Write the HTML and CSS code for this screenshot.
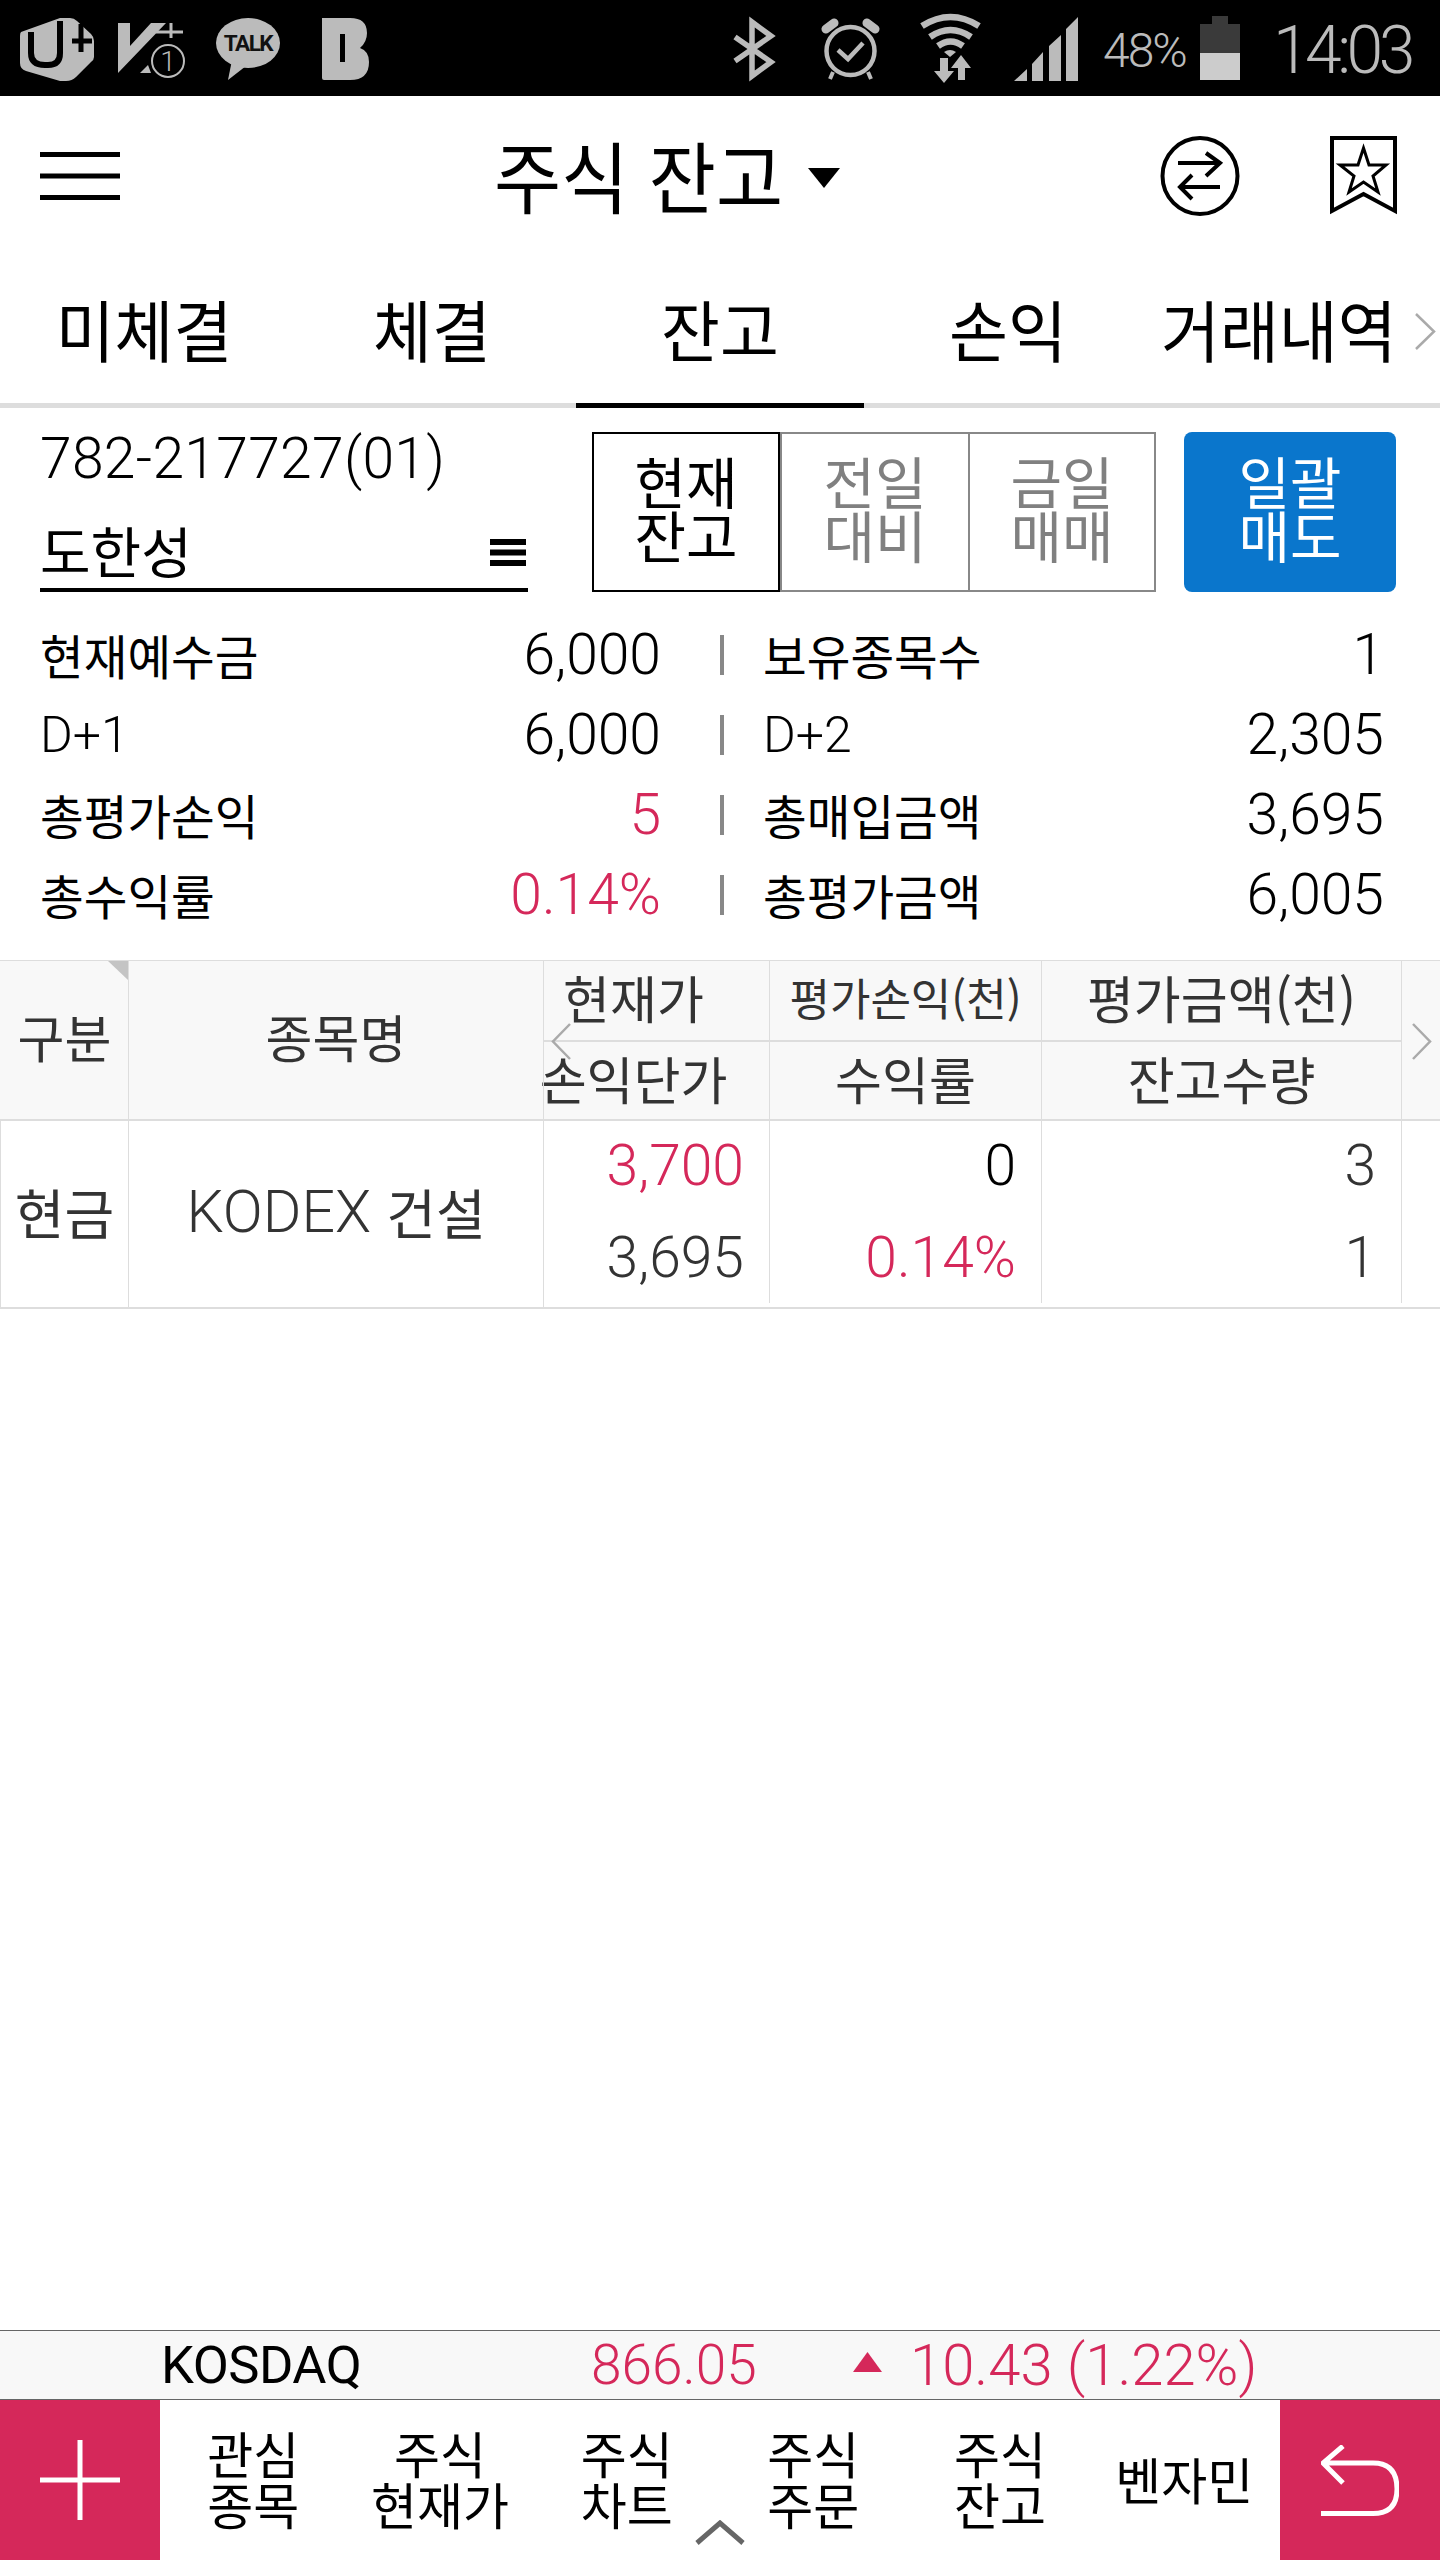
FILE: index.html
```html
<!DOCTYPE html>
<html lang="ko">
<head>
<meta charset="utf-8">
<title>주식 잔고</title>
<link rel="stylesheet" href="styles.css">
</head>
<body>
<div class="app">
  <div class="status">
    <div class="status-left">
      <svg class="ic-u" viewBox="0 0 74 65"><path d="M1 15 L40 1 H50 Q54 1 57 4 L71 17 Q74 20 74 24 V40 Q74 43 71 45 L56 60 Q52 64 46 64 L40 64 L6 54 Q0 52 0 46 V19 Q0 16 1 15Z" fill="#bbb"/><path d="M11 15 V36 Q11 48 25 48 H28 Q40 48 40 36 V4" fill="none" stroke="#000" stroke-width="6"/><path d="M52 24 H72 M61 7 V35" stroke="#000" stroke-width="5"/></svg>
      <svg class="ic-v" viewBox="0 0 68 56"><path d="M0 0 H12 V23 L33 0 H48 L0 50Z M22 50 L30 42 L33 50Z" fill="#bbb"/><path d="M38 9 H65 M53 0 V15" stroke="#bbb" stroke-width="3"/><circle cx="50" cy="38" r="16" fill="#000" stroke="#bbb" stroke-width="2"/><text class="ic-v-num" x="50" y="48" text-anchor="middle">1</text></svg>
      <svg class="ic-talk" viewBox="0 0 64 62"><ellipse cx="32" cy="25" rx="32" ry="25" fill="#bbb"/><path d="M16 42 L12 62 L30 48Z" fill="#bbb"/><text class="ic-talk-text" x="32" y="33" text-anchor="middle">TALK</text></svg>
      <svg class="ic-b" viewBox="0 0 47 62"><path d="M0 0 H28 Q45 0 45 15 Q45 24 38 30 Q47 33 47 44 Q47 62 28 62 H2 Q0 62 0 60Z M18 16 V44 H23 V16Z" fill="#bbb" fill-rule="evenodd"/></svg>
    </div>
    <div class="status-right">
      <svg class="ic-bt" viewBox="0 0 44 66"><path d="M3 21 L39 46 L20 60 V6 L39 20 L3 45" fill="none" stroke="#bbb" stroke-width="5.500"/></svg>
      <svg class="ic-alarm" viewBox="0 0 59 62"><circle cx="29.500" cy="33" r="24" fill="none" stroke="#bbb" stroke-width="4.500"/><path d="M17 32 L27 41 L42 25" fill="none" stroke="#bbb" stroke-width="4.500"/><path d="M5 11 L13 5 M54 11 L46 5" stroke="#bbb" stroke-width="9" stroke-linecap="round"/><path d="M12 54 L9 61 M47 54 L50 61" stroke="#bbb" stroke-width="4"/></svg>
      <svg class="ic-wifi" viewBox="0 0 65 71"><path d="M4 13 Q32.500 -5 61 13 M12 24 Q32.500 10 53 24 M20 33 Q32.500 24 45 33" fill="none" stroke="#bbb" stroke-width="6.500"/><path d="M26 39 Q32 35 38 39 L32 44Z" fill="#bbb"/><path d="M22 45 H30 V58 H36 L26 70 L16 58 H22Z" fill="#bbb"/><path d="M43 42 L53 55 H47 V67 H40 V55 H33Z" fill="#bbb"/></svg>
      <svg class="ic-signal" viewBox="0 0 64 64"><path d="M0 64 L13 52 V64Z M18 64 V47 L29 35 V64Z M35 64 V29 L47 18 V64Z M52 64 V12 L64 0 V64Z" fill="#bbb"/></svg>
      <span class="batt-text">48%</span>
      <div class="battery"><div class="batt-nub"></div><div class="batt-empty"></div><div class="batt-fill"></div></div>
      <span class="clock">14:03</span>
    </div>
  </div>

  <header class="head">
    <svg class="ic-burger" viewBox="0 0 80 48"><path d="M0 2.500 H80 M0 24 H80 M0 45.500 H80" stroke="#000" stroke-width="5"/></svg>
    <h1 class="title"><span class="tall-title">주식 잔고</span></h1>
    <svg class="ic-caret" viewBox="0 0 32 20"><path d="M0 0 H32 L16 20Z" fill="#000"/></svg>
    <svg class="ic-swap" viewBox="0 0 80 80"><ellipse cx="40" cy="40" rx="37.500" ry="38" fill="none" stroke="#000" stroke-width="4"/><path d="M18 27 H60 M46 17 L60 27 L46 40 M60 51 H20 M32 39 L20 51 L32 63" fill="none" stroke="#000" stroke-width="4"/></svg>
    <svg class="ic-mark" viewBox="0 0 67 80"><path d="M2 2 H65 V75 L33.500 58 L2 75Z" fill="none" stroke="#000" stroke-width="4"/><path d="M33.500 12 L39 29 L56 29 L43 40 L48 56 L33.500 46 L19 56 L24 40 L10 29 L28 29Z" fill="none" stroke="#000" stroke-width="3"/></svg>
  </header>

  <nav class="tabs">
    <div class="tab"><span class="tall-tab">미체결</span></div>
    <div class="tab"><span class="tall-tab">체결</span></div>
    <div class="tab tab-on"><span class="tall-tab">잔고</span></div>
    <div class="tab"><span class="tall-tab">손익</span></div>
    <div class="tab tab-last"><span class="tall-tab">거래내역</span>
      <svg class="ic-tabnext" viewBox="0 0 21 37"><path d="M1 1 L19 18.500 L1 36" fill="none" stroke="#aaa" stroke-width="2.500"/></svg>
    </div>
  </nav>

  <section class="account">
    <div class="acct-info">
      <div class="acct-no">782-217727(01)</div>
      <div class="acct-name"><span>도한성</span>
        <svg class="ic-list" viewBox="0 0 36 27"><path d="M0 3 H36 M0 13.500 H36 M0 24 H36" stroke="#000" stroke-width="6"/></svg>
      </div>
    </div>
    <div class="seg">
      <div class="seg-btn seg-on">현재<br>잔고</div>
      <div class="seg-btn">전일<br>대비</div>
      <div class="seg-btn seg-end">금일<br>매매</div>
    </div>
    <div class="sell">일괄<br>매도</div>
  </section>

  <section class="summary">
    <div class="s-label">현재예수금</div><div class="s-val">6,000</div><div class="s-sep"><i></i></div><div class="s-label">보유종목수</div><div class="s-val s-val-r">1</div>
    <div class="s-label s-latin">D+1</div><div class="s-val">6,000</div><div class="s-sep"><i></i></div><div class="s-label s-latin">D+2</div><div class="s-val s-val-r">2,305</div>
    <div class="s-label">총평가손익</div><div class="s-val red">5</div><div class="s-sep"><i></i></div><div class="s-label">총매입금액</div><div class="s-val s-val-r">3,695</div>
    <div class="s-label">총수익률</div><div class="s-val red">0.14%</div><div class="s-sep"><i></i></div><div class="s-label">총평가금액</div><div class="s-val s-val-r">6,005</div>
  </section>

  <section class="table">
    <div class="thead">
      <div class="cell c1">구분<i class="corner"></i></div>
      <div class="cell c2">종목명</div>
      <div class="stack c3 h-offset"><div class="half">현재가</div><div class="half">손익단가</div></div>
      <div class="stack c4"><div class="half small">평가손익(천)</div><div class="half">수익률</div></div>
      <div class="stack c5"><div class="half">평가금액(천)</div><div class="half">잔고수량</div></div>
      <div class="cell c6"></div>
    </div>
    <div class="tbody">
      <div class="cell c1">현금</div>
      <div class="cell c2"><span class="kodex">KODEX</span>&nbsp;건설</div>
      <div class="stack nums c3"><div class="n1 red">3,700</div><div class="n2">3,695</div></div>
      <div class="stack nums c4"><div class="n1 black">0</div><div class="n2 red">0.14%</div></div>
      <div class="stack nums c5"><div class="n1">3</div><div class="n2">1</div></div>
      <div class="c6"></div>
    </div>
    <svg class="tbl-prev" viewBox="0 0 20 37"><path d="M19 1 L2 18.500 L19 36" fill="none" stroke="#aaa" stroke-width="2.500"/></svg>
    <svg class="tbl-next" viewBox="0 0 20 37"><path d="M1 1 L18 18.500 L1 36" fill="none" stroke="#aaa" stroke-width="2.500"/></svg>
  </section>

  <div class="spacer"></div>

  <section class="ticker">
    <span class="t-name">KOSDAQ</span>
    <span class="t-price red">866.05</span>
    <svg class="ic-up" viewBox="0 0 29 20"><path d="M14.500 0 L29 20 H0Z" fill="#d5285a"/></svg>
    <span class="t-diff red">10.43 (1.22%)</span>
  </section>

  <footer class="bottom">
    <div class="b-box"><svg class="ic-plus" viewBox="0 0 80 80"><path d="M0 40 H80 M40 0 V80" stroke="#fff" stroke-width="5"/></svg></div>
    <div class="b-items">
      <div class="b-item">관심<br>종목</div>
      <div class="b-item">주식<br>현재가</div>
      <div class="b-item">주식<br>차트</div>
      <div class="b-item">주식<br>주문</div>
      <div class="b-item">주식<br>잔고</div>
      <div class="b-item b-solo">벤자민</div>
    </div>
    <div class="b-box"><svg class="ic-back" viewBox="0 0 78 71"><path d="M0 68.500 H52 Q76 68.500 76 44 Q76 18 52 18 H2 M22 1 L2 18 L22 38" fill="none" stroke="#fff" stroke-width="5"/></svg></div>
    <svg class="ic-handle" viewBox="0 0 50 25"><path d="M2 23 L25 3 L48 23" fill="none" stroke="#666" stroke-width="5"/></svg>
  </footer>
</div>
</body>
</html>
```

FILE: styles.css
```css
* { box-sizing: border-box; }
html, body { margin: 0; padding: 0; background: #fff; }
body { font-family: Roboto, "Noto Sans CJK KR", sans-serif; color: #000; }
svg { display: block; flex: none; }
.app { width: 1440px; height: 2560px; display: flex; flex-direction: column; overflow: hidden; position: relative; }
.red { color: #d5285a; }
.black { color: #000; }

/* status bar */
.status { height: 96px; background: #000; display: flex; justify-content: space-between; align-items: flex-start; color: #bbb; }
.status-left { display: flex; padding-left: 20px; }
.status-right { display: flex; padding-right: 27px; }
.ic-u { width: 74px; height: 65px; margin-top: 17px; }
.ic-v { width: 68px; height: 56px; margin: 23px 0 0 24px; }
.ic-v-num { font-size: 28px; font-weight: 300; fill: #bbb; }
.ic-talk { width: 64px; height: 62px; margin: 18px 0 0 30px; }
.ic-talk-text { font-size: 22.500px; font-weight: 700; fill: #111; letter-spacing: -1.500px; font-family: Roboto, sans-serif; }
.ic-b { width: 47px; height: 62px; margin: 18px 0 0 42px; }
.ic-bt { width: 44px; height: 66px; margin-top: 16px; }
.ic-alarm { width: 59px; height: 62px; margin: 18px 0 0 45px; }
.ic-wifi { width: 65px; height: 71px; margin: 13px 0 0 38px; }
.ic-signal { width: 64px; height: 64px; margin: 17px 0 0 31px; }
.batt-text { font-size: 48px; font-weight: 300; letter-spacing: -2px; line-height: 50px; margin: 26px 0 0 25px; width: 97px; white-space: nowrap; }
.battery { width: 40px; height: 64px; margin-top: 16px; display: flex; flex-direction: column; align-items: center; }
.batt-nub { width: 16px; height: 8px; background: #3a3a3a; }
.batt-empty { width: 40px; height: 29px; background: #3a3a3a; }
.batt-fill { width: 40px; height: 27px; background: #ccc; }
.clock { font-size: 66px; font-weight: 300; line-height: 70px; margin: 16px 0 0 33px; width: 140px; letter-spacing: -4.500px; white-space: nowrap; }

/* header */
.head { height: 190px; display: flex; align-items: flex-start; font-family: "Noto Sans CJK KR", sans-serif; }
.ic-burger { width: 80px; height: 48px; margin: 56px 0 0 40px; }
.title { margin: 32px 0 0 374px; font-size: 73px; font-weight: 400; line-height: 90px; width: 291px; white-space: nowrap; }
.tall-title { display: inline-block; transform: scaleY(1.08); transform-origin: 50% 50%; }
.ic-caret { width: 32px; height: 20px; margin: 72px 0 0 23px; }
.ic-swap { width: 80px; height: 80px; margin: 40px 0 0 320px; }
.ic-mark { width: 67px; height: 80px; margin: 40px 0 0 90px; }

/* tabs */
.tabs { height: 122px; display: grid; grid-template-columns: repeat(5, 288px); border-bottom: 5px solid #ddd; font-family: "Noto Sans CJK KR", sans-serif; font-size: 64px; }
.tab { height: 122px; display: flex; align-items: flex-start; justify-content: center; line-height: 84px; }
.tab-on { border-bottom: 5px solid #000; }
.tab-last { justify-content: flex-start; padding-left: 9px; position: relative; }
.tall-tab { display: inline-block; transform: scaleY(1.04); white-space: nowrap; }
.ic-tabnext { width: 21px; height: 37px; position: absolute; left: 263px; top: 27px; }

/* account */
.account { display: flex; padding: 24px 0 0 40px; height: 184px; }
.acct-info { width: 488px; height: 160px; display: flex; flex-direction: column; justify-content: space-between; }
.acct-no { font-size: 57px; font-weight: 300; line-height: 54px; letter-spacing: 0.300px; white-space: nowrap; }
.acct-name { height: 76px; display: flex; justify-content: space-between; align-items: center; border-bottom: 4px solid #000; font-family: "Noto Sans CJK KR", sans-serif; font-size: 55px; line-height: 60px; padding: 0 2px 6px 0; }
.ic-list { width: 36px; height: 27px; margin-top: 6px; }
.seg { display: flex; margin-left: 64px; }
.seg-btn { width: 188px; height: 160px; border: 2px solid #888; border-right: 0; color: #808080; display: flex; align-items: center; justify-content: center; text-align: center; font-family: "Noto Sans CJK KR", sans-serif; font-size: 56px; line-height: 54px; padding-bottom: 10px; }
.seg-end { border-right: 2px solid #888; }
.seg-on { border: 2px solid #000; color: #000; }
.sell { width: 212px; height: 160px; margin-left: 28px; background: #0a76cc; border-radius: 8px; color: #fff; display: flex; align-items: center; justify-content: center; text-align: center; font-family: "Noto Sans CJK KR", sans-serif; font-size: 56px; line-height: 54px; padding-bottom: 10px; }

/* summary */
.summary { display: grid; grid-template-columns: 340px 278px 105px 303px 315px; grid-auto-rows: 80px; padding: 23px 0 0 40px; height: 368px; align-items: center; }
.s-label { font-family: "Noto Sans CJK KR", sans-serif; font-size: 47.500px; line-height: 78px; white-space: nowrap; }
.s-latin { font-family: Roboto, sans-serif; font-size: 50px; font-weight: 300; }
.s-val { font-size: 57px; font-weight: 300; line-height: 80px; text-align: right; margin-right: -3px; }
.s-sep { height: 80px; display: flex; align-items: center; padding-left: 62px; }
.s-sep i { display: block; width: 4px; height: 40px; background: #888; }

/* table */
.table { position: relative; color: #333; font-family: "Noto Sans CJK KR", sans-serif; font-size: 51px; border-left: 1px solid #ddd; }
.thead, .tbody { display: flex; margin-left: -1px; padding-left: 1px; }
.thead { height: 161px; background: #f8f8f8; border-top: 1px solid #ddd; border-bottom: 2px solid #ddd; }
.tbody { height: 188px; border-bottom: 2px solid #ddd; }
.cell { display: flex; align-items: center; justify-content: center; border-right: 1px solid #ddd; position: relative; white-space: nowrap; }
.thead .cell { padding-bottom: 8px; }
.c1 { width: 128px; }
.c2 { width: 415px; }
.c3 { width: 226px; }
.c4 { width: 272px; }
.c5 { width: 360px; }
.c6 { width: 38px; }
.thead .cell.c6 { border-right: 0; }
.stack { display: flex; flex-direction: column; border-right: 1px solid #ddd; }
.half { flex: none; height: 77px; display: flex; align-items: center; justify-content: center; white-space: nowrap; padding-bottom: 6px; }
.half:first-child { border-bottom: 2px solid #ddd; height: 81px; padding-bottom: 8px; }
.small { font-size: 44px; }
.h-offset .half { padding-right: 46px; }
.corner { position: absolute; right: 0; top: 0; width: 20px; height: 19px; background: #c4c4c4; clip-path: polygon(0 0, 100% 0, 100% 100%); }
.kodex { font-family: Roboto, sans-serif; font-size: 59px; font-weight: 300; }
.tbody .c1, .tbody .c2 { font-size: 54px; }
.tbody .cell { padding-bottom: 6px; }
.nums { height: 182px; font-family: Roboto, sans-serif; font-size: 57px; font-weight: 300; text-align: right; padding-right: 25px; }
.n1 { height: 90px; line-height: 90px; }
.n2 { height: 92px; line-height: 94px; }
.tbl-prev, .tbl-next { position: absolute; top: 63px; width: 20px; height: 37px; }
.tbl-prev { left: 550px; }
.tbl-next { left: 1411px; }

.spacer { flex: 1; }

/* ticker */
.ticker { height: 70px; background: #f8f8f8; border-top: 1px solid #666; border-bottom: 1px solid #666; display: flex; align-items: center; }
.t-name { margin-left: 161px; width: 430px; font-size: 52.500px; font-weight: 400; line-height: 60px; letter-spacing: -0.500px; }
.t-price { width: 262px; font-size: 55px; font-weight: 300; line-height: 60px; }
.ic-up { width: 29px; height: 20px; margin-top: -6px; }
.t-diff { margin-left: 28px; font-size: 58px; font-weight: 300; line-height: 60px; white-space: nowrap; }

/* bottom bar */
.bottom { height: 160px; display: flex; position: relative; }
.b-box { width: 160px; height: 160px; background: #d5285a; display: flex; align-items: center; justify-content: center; }
.ic-plus { width: 80px; height: 80px; }
.ic-back { width: 78px; height: 71px; }
.b-items { flex: 1; display: grid; grid-template-columns: repeat(6, 1fr); font-family: "Noto Sans CJK KR", sans-serif; font-size: 50px; line-height: 51px; text-align: center; }
.b-item { display: flex; align-items: center; justify-content: center; padding-bottom: 4px; }
.b-solo { padding-right: 5px; }
.ic-handle { position: absolute; left: 695px; bottom: 15px; width: 50px; height: 25px; }
```
